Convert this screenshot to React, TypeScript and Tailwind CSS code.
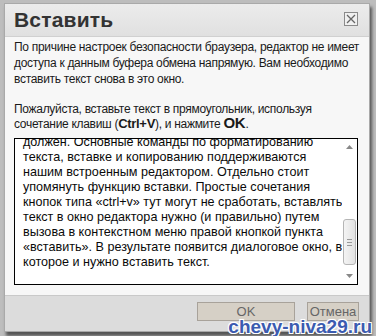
const pasted = [
  "должен. Основные команды по форматированию",
  "текста, вставке и копированию поддерживаются",
  "нашим встроенным редактором. Отдельно стоит",
  "упомянуть функцию вставки. Простые сочетания",
  "кнопок типа «ctrl+v» тут могут не сработать, вставлять",
  "текст в окно редактора нужно (и правильно) путем",
  "вызова в контекстном меню правой кнопкой пункта",
  "«вставить». В результате появится диалоговое окно, в",
  "которое и нужно вставить текст.",
];

function Scrollbar() {
  return (
    <div className="flex w-[15px] flex-col items-center py-[4px]">
      <svg width="7" height="4" viewBox="0 0 7 4" className="mt-[2px]">
        <path d="M0 4 L3.5 0 L7 4 Z" fill="#888" />
      </svg>
      <div className="flex-1" />
      <div className="mb-[9px] flex h-[46px] w-[13px] flex-col items-center justify-center gap-[2px] rounded-[3px] border border-[#b5b5b5] bg-gradient-to-r from-[#f4f4f4] to-[#e2e2e2]">
        <div className="h-px w-[5px] bg-[#999]" />
        <div className="h-px w-[5px] bg-[#999]" />
        <div className="h-px w-[5px] bg-[#999]" />
      </div>
      <svg width="7" height="4" viewBox="0 0 7 4" className="mb-[2px]">
        <path d="M0 0 L3.5 4 L7 0 Z" fill="#888" />
      </svg>
    </div>
  );
}

export default function App() {
  return (
    <div className="relative h-[336px] w-[376px] overflow-hidden bg-[#bdbdbd] font-['Liberation_Sans',Arial,sans-serif]">
      <div className="ml-[4px] mt-[3px] flex w-[366px] flex-col border border-[#a9a9a9] bg-[#f7f7f7] shadow-[2px_4px_3px_#555]">
        {/* title */}
        <div className="flex h-[33px] items-center justify-between border-b border-[#d0d0d0] bg-gradient-to-b from-[#ececec] to-[#e0e0e0] pl-[9px] pr-[11px]">
          <span className="text-[21px] font-bold tracking-[0.2px] text-[#333]">Вставить</span>
          <div className="mt-[-3px] flex h-[14px] w-[14px] items-center justify-center border border-[#8a8a8a] bg-[#f0f0f0]">
            <svg width="10" height="10" viewBox="0 0 10 10">
              <path d="M1 1 L9 9 M9 1 L1 9" stroke="#666" strokeWidth="1.3" />
            </svg>
          </div>
        </div>

        {/* body */}
        <div className="flex h-[258px] flex-col px-[9px] pt-[2px]">
          <p className="h-[48px] whitespace-nowrap text-[12px] leading-[16px] tracking-[-0.3px] text-[#1a1a1a]">
            По причине настроек безопасности браузера, редактор не имеет
            <br />
            доступа к данным буфера обмена напрямую. Вам необходимо
            <br />
            вставить текст снова в это окно.
          </p>
          <p className="mt-[15px] h-[30px] whitespace-nowrap text-[12px] leading-[15px] tracking-[-0.3px] text-[#1a1a1a]">
            Пожалуйста, вставьте текст в прямоугольник, используя
            <br />
            сочетание клавиш (<b className="text-[13px] leading-[0]">Ctrl+V</b>), и нажмите{" "}
            <b className="text-[15px] leading-[0]">OK</b>.
          </p>

          <div className="mt-[6px] flex h-[147px] w-[344px] overflow-hidden border border-black bg-white">
            <div className="flex-1 overflow-hidden pl-[8px]">
              <div className="mt-[-4px] text-[12.6px] leading-[15px] text-[#0a0a0a]">
                {pasted.map((line) => (
                  <div key={line} className="whitespace-nowrap">
                    {line}
                  </div>
                ))}
              </div>
            </div>
            <Scrollbar />
          </div>
        </div>

        {/* footer */}
        <div className="flex h-[36px] items-start justify-end gap-[12px] border-t border-[#c9c9c9] bg-[#dcdcdc] pr-[10px] pt-[6px]">
          <button className="h-[19px] w-[98px] border border-[#a8a29a] bg-[#d6d0c6] text-[13px] leading-[17px] text-[#666]">
            OK
          </button>
          <button className="h-[19px] w-[52px] border border-[#a8a29a] bg-[#d6d0c6] text-[13px] leading-[17px] text-[#666]">
            Отмена
          </button>
        </div>
      </div>

      <div className="absolute bottom-[-2px] right-[4px] text-[19px] font-bold leading-[22px] text-[#3b5bb0] [text-shadow:0_0_1px_#fff,1px_1px_0_#fff,-1px_-1px_0_#fff,1px_-1px_0_#fff,-1px_1px_0_#fff]">
        chevy-niva29.ru
      </div>
    </div>
  );
}
